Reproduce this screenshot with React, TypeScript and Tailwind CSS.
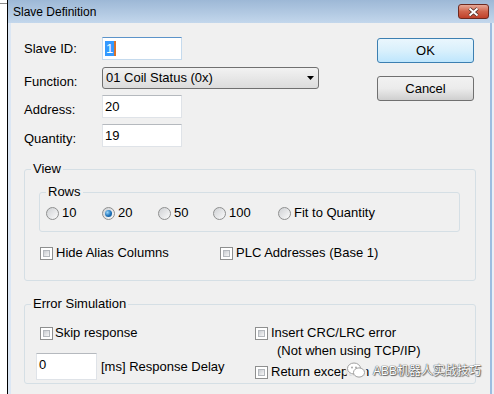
import React from "react"

const font = "font-['Liberation_Sans',Arial,sans-serif]"

function Check() {
  return (
    <span className="flex w-[13px] h-[13px] shrink-0 border border-[#8e8f8f] bg-white p-[2px]">
      <span className="flex-1 border border-[#b4b8bd] bg-linear-to-br from-[#c9ccd1] to-[#f7f7f7]" />
    </span>
  )
}

function Radio({ checked }: { checked?: boolean }) {
  return (
    <span className="flex w-[13px] h-[13px] shrink-0 items-center justify-center rounded-full border border-[#8e8f8f] bg-linear-to-br from-[#cfd1d4] to-[#fbfbfb]">
      {checked && (
        <span className="w-[7px] h-[7px] rounded-full bg-[radial-gradient(circle_at_35%_35%,#9ad6fa,#1a6fb8_55%,#0b4f8a)]" />
      )}
    </span>
  )
}

function TextBox({ value, className = "" }: { value: React.ReactNode; className?: string }) {
  return (
    <div
      className={`flex items-center bg-white border border-[#dfe3e8] border-t-[#b5b9be] pl-[2px] text-[13px] leading-[14px] ${className}`}
    >
      {value}
    </div>
  )
}

function Legend({ children }: { children: React.ReactNode }) {
  return <legend className="ml-[6px] px-[2px] text-[13px] leading-[14px]">{children}</legend>
}

function WinButton({ label, primary }: { label: string; primary?: boolean }) {
  return (
    <div
      className={`flex w-[97px] h-[25px] items-center justify-center rounded-[3px] border text-[13px] ${
        primary
          ? "border-[#3c7fb1] bg-linear-to-b from-[#eaf6fd] via-[#d9f0fc] to-[#bee6fd]"
          : "border-[#707070] bg-linear-to-b from-[#f2f2f2] via-[#ebebeb] to-[#cfcfcf]"
      }`}
    >
      {label}
    </div>
  )
}

export default function App() {
  return (
    <div className={`flex w-[494px] h-[394px] overflow-hidden bg-white text-black ${font}`}>
      <div className="w-[7px] pt-[3px]">
        <div className="h-px bg-[#8a8a8a]" />
      </div>
      <div className="flex flex-1 flex-col border-l border-black bg-[#e9eff7]">
        {/* title bar */}
        <div className="flex h-[23px] items-center justify-between pl-[5px] pr-[5px] bg-linear-to-b from-[#9db8d6] to-[#c3d7ec]">
          <span className="text-[12px]">Slave Definition</span>
          <div className="flex w-[31px] h-[15px] items-center justify-center rounded-[3px] border border-[#6e2a20] bg-linear-to-b from-[#e6a999] via-[#d0644c] to-[#c0402a]">
            <svg width="13" height="10" viewBox="0 0 13 10">
              <path d="M2.5 1.5 L10.5 8.5 M10.5 1.5 L2.5 8.5" stroke="#4a2a25" strokeWidth="3.6" />
              <path d="M2.5 1.5 L10.5 8.5 M10.5 1.5 L2.5 8.5" stroke="#fff" strokeWidth="2" />
            </svg>
          </div>
        </div>

        {/* client */}
        <div className="flex flex-1 flex-col mr-[2px] bg-[#f0f0f0] border-l-[3px] border-l-[#dce7f4] border-r-[2px] border-r-[#9dbde0]">
          <div className="flex pt-[14px] pl-[13px] pr-[16px]">
            <div className="flex flex-col gap-[6px] text-[13px]">
              <div className="flex h-[23px] items-center">
                <span className="w-[78px]">Slave ID:</span>
                <div className="flex w-[80px] h-[23px] items-center bg-white border border-[#c5daed] border-t-[#5c93c9] pl-[2px] text-[13px] leading-[15px]">
                  <span className="bg-[#3399ff] px-[1px] text-white">1</span>
                  <span className="w-[2px] h-[15px] bg-[#d9722a]" />
                </div>
              </div>
              <div className="flex h-[23px] items-center">
                <span className="w-[78px] pt-[8px]">Function:</span>
                <div className="flex w-[217px] h-[22px] mt-[1px] items-center justify-between rounded-[3px] border border-[#707070] bg-linear-to-b from-[#f2f2f2] to-[#dcdcdc] pl-[3px] pr-[4px]">
                  <span>01 Coil Status (0x)</span>
                  <svg width="7" height="4" viewBox="0 0 7 4">
                    <path d="M0 0 H7 L3.5 4 Z" fill="#000" />
                  </svg>
                </div>
              </div>
              <div className="flex h-[23px] items-center">
                <span className="w-[78px] pt-[6px]">Address:</span>
                <TextBox value="20" className="w-[80px] h-[23px]" />
              </div>
              <div className="flex h-[23px] items-center">
                <span className="w-[78px] pt-[6px]">Quantity:</span>
                <TextBox value="19" className="w-[80px] h-[23px]" />
              </div>
            </div>
            <div className="ml-auto flex flex-col gap-[13px] pt-[1px]">
              <WinButton label="OK" primary />
              <WinButton label="Cancel" />
            </div>
          </div>

          {/* View */}
          <fieldset className="ml-[13px] mt-[15px] w-[452px] rounded-[3px] border border-[#d5dfe5] text-[13px]">
            <Legend>View</Legend>
            <div className="px-[14px] pt-[9px] pb-[20px]">
              <fieldset className="w-[421px] rounded-[3px] border border-[#d5dfe5]">
                <Legend>Rows</Legend>
                <div className="flex pl-[6px] pt-[7px] pb-[11px] leading-[14px]">
                  <div className="flex w-[56px] items-center gap-[3px]"><Radio />10</div>
                  <div className="flex w-[56px] items-center gap-[3px]"><Radio checked />20</div>
                  <div className="flex w-[55px] items-center gap-[3px]"><Radio />50</div>
                  <div className="flex w-[65px] items-center gap-[3px]"><Radio />100</div>
                  <div className="flex items-center gap-[3px]"><Radio />Fit to Quantity</div>
                </div>
              </fieldset>
              <div className="flex mt-[14px] pl-[1px] leading-[14px]">
                <div className="flex w-[180px] items-center gap-[3px]"><Check />Hide Alias Columns</div>
                <div className="flex items-center gap-[3px]"><Check />PLC Addresses (Base 1)</div>
              </div>
            </div>
          </fieldset>

          {/* Error Simulation */}
          <fieldset className="ml-[13px] mt-[16px] w-[452px] rounded-[3px] border border-[#d5dfe5] text-[13px]">
            <Legend>Error Simulation</Legend>
            <div className="flex pl-[11px] pt-[15px] pb-[3px] leading-[14px]">
              <div className="flex w-[219px] flex-col">
                <div className="flex ml-[4px] items-center gap-[2px]"><Check />Skip response</div>
                <div className="flex mt-[13px] items-center gap-[4px]">
                  <div className="flex w-[61px] h-[27px] items-start bg-white border border-[#dfe3e8] border-t-[#b5b9be] pl-[2px] pt-[4px]">0</div>
                  <span className="pt-[1px]">[ms] Response Delay</span>
                </div>
              </div>
              <div className="flex flex-col">
                <div className="flex items-center gap-[3px]"><Check />Insert CRC/LRC error</div>
                <div className="mt-[3px] pl-[22px] leading-[15px]">(Not when using TCP/IP)</div>
                <div className="relative flex mt-[7px] items-center gap-[3px]">
                  <Check />Return exception
                  <div className="absolute left-[90px] top-[-5px] flex items-center gap-[5px] whitespace-nowrap">
                    <svg width="23" height="21" viewBox="0 0 23 21">
                      <ellipse cx="11" cy="10.5" rx="10.5" ry="10" fill="#f0f0f0" opacity="0.92" />
                      <ellipse cx="9" cy="8.5" rx="6.5" ry="5.5" fill="#fff" stroke="#a0a0a0" strokeWidth="1" />
                      <ellipse cx="14" cy="12.5" rx="5.5" ry="4.6" fill="#fff" stroke="#a0a0a0" strokeWidth="1" />
                      <circle cx="7" cy="7.5" r="0.9" fill="#a0a0a0" />
                      <circle cx="11" cy="7.5" r="0.9" fill="#a0a0a0" />
                    </svg>
                    <span className="text-[12px] text-white [text-shadow:0_0_1px_#444,0_0_1px_#444,1px_1px_1px_#666] font-['Liberation_Sans','Noto_Sans_CJK_SC',sans-serif]">
                      ABB机器人实战技巧
                    </span>
                  </div>
                </div>
              </div>
            </div>
          </fieldset>
        </div>
      </div>
    </div>
  )
}
